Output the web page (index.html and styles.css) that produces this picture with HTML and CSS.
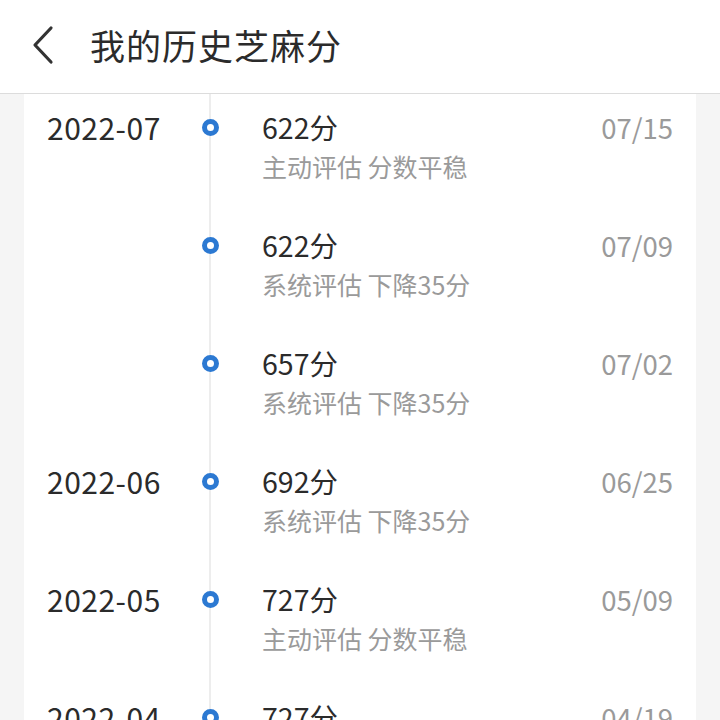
FILE: index.html
```html
<!DOCTYPE html>
<html lang="zh-CN">
<head>
    <meta charset="UTF-8">
    <meta name="viewport" content="width=device-width, initial-scale=1.0">
    <title>我的历史芝麻分</title>
    <link rel="stylesheet" href="styles.css">
</head>
<body>
    <header class="topbar">
        <svg class="back" width="26" height="40" viewBox="0 0 26 40">
            <path d="M21 3 L5 20 L21 37" fill="none" stroke="#333" stroke-width="3.2" stroke-linecap="round" stroke-linejoin="round"/>
        </svg>
        <h1>我的历史芝麻分</h1>
    </header>
    <main class="page">
        <div class="card">
            <div class="row">
                <div class="month">2022-07</div>
                <div class="axis"><span class="dot"></span></div>
                <div class="info">
                    <div class="score">622分</div>
                    <div class="note">主动评估 分数平稳</div>
                </div>
                <div class="date">07/15</div>
            </div>
            <div class="row">
                <div class="month"></div>
                <div class="axis"><span class="dot"></span></div>
                <div class="info">
                    <div class="score">622分</div>
                    <div class="note">系统评估 下降35分</div>
                </div>
                <div class="date">07/09</div>
            </div>
            <div class="row">
                <div class="month"></div>
                <div class="axis"><span class="dot"></span></div>
                <div class="info">
                    <div class="score">657分</div>
                    <div class="note">系统评估 下降35分</div>
                </div>
                <div class="date">07/02</div>
            </div>
            <div class="row">
                <div class="month">2022-06</div>
                <div class="axis"><span class="dot"></span></div>
                <div class="info">
                    <div class="score">692分</div>
                    <div class="note">系统评估 下降35分</div>
                </div>
                <div class="date">06/25</div>
            </div>
            <div class="row">
                <div class="month">2022-05</div>
                <div class="axis"><span class="dot"></span></div>
                <div class="info">
                    <div class="score">727分</div>
                    <div class="note">主动评估 分数平稳</div>
                </div>
                <div class="date">05/09</div>
            </div>
            <div class="row">
                <div class="month">2022-04</div>
                <div class="axis"><span class="dot"></span></div>
                <div class="info">
                    <div class="score">727分</div>
                    <div class="note">主动评估 分数平稳</div>
                </div>
                <div class="date">04/19</div>
            </div>
        </div>
    </main>
</body>
</html>
```

FILE: styles.css
```css
body {
    margin: 0;
    padding: 0;
    font-family: "Noto Sans CJK SC", "Noto Sans", sans-serif;
    background-color: #f5f5f5;
    overflow: hidden;
}

.topbar {
    height: 93px;
    background-color: #fff;
    border-bottom: 1px solid #dcdcdc;
    display: flex;
    align-items: center;
    padding-left: 30px;
}

.back {
    margin-right: 34px;
    margin-top: -3px;
}

.topbar h1 {
    margin: 0 0 5px;
    font-size: 35px;
    font-weight: 400;
    color: #2b2b2b;
    letter-spacing: 1px;
}

.page {
    padding: 0 24px;
}

.card {
    background-color: #fff;
    padding: 0 23px;
}

.row {
    display: grid;
    grid-template-columns: 139px 48px 1fr auto;
    padding-bottom: 26px;
}

.month,
.score,
.date {
    padding-top: 14px;
    line-height: 38px;
    font-size: 28px;
}

.month {
    color: #2b2b2b;
    font-size: 30px;
    letter-spacing: 0.5px;
}

.axis {
    background: linear-gradient(#ededed, #ededed) no-repeat center / 2px 100%;
    margin-bottom: -26px;
    display: flex;
    justify-content: center;
    align-items: flex-start;
    padding-top: 25px;
}

.dot {
    width: 7px;
    height: 7px;
    border: 5px solid #2c79d2;
    border-radius: 50%;
    background-color: #fff;
}

.info {
    padding-left: 28px;
}

.score {
    color: #2b2b2b;
    font-size: 28.5px;
}

.note {
    line-height: 40px;
    font-size: 25px;
    color: #9a9a9a;
}

.date {
    color: #9a9a9a;
    font-size: 27.5px;
}
```
